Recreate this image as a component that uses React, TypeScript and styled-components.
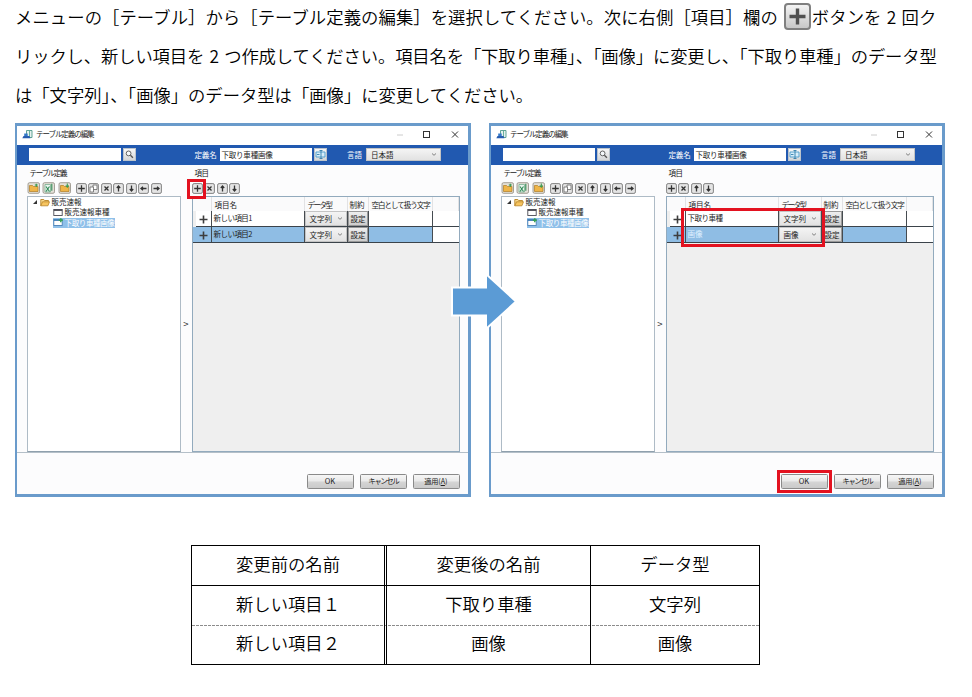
import React from "react";
import styled, { createGlobalStyle, css } from "styled-components";

const Global = createGlobalStyle`
  * { box-sizing: border-box; }
  body { margin: 0; background: #fff; overflow: hidden; }
`;

const Page = styled.main`
  width: 972px;
  height: 697px;
  overflow: hidden;
  color: #000;
  font-family: "Noto Sans CJK JP", "Noto Sans", sans-serif;
  font-weight: 350;
`;

/* ---------- instructions ---------- */

const Instructions = styled.section`
  margin: -3px 0 0 15px;
  height: 126px;
  font-size: 17.33px;
`;

const Line = styled.div<{ $spacing?: number }>`
  display: flex;
  align-items: center;
  height: 39px;
  white-space: pre;
  letter-spacing: ${(p) => p.$spacing ?? 0}px;
`;

const Digit = styled.span`
  display: inline-block;
  width: 20px;
  text-align: center;
  letter-spacing: 0;
`;

const BigPlus = styled.span`
  display: flex;
  flex: none;
  width: 27px;
  height: 27px;
  margin: 0 1px 0 6px;
`;

/* ---------- dialogs ---------- */

const Figures = styled.section`
  position: relative;
  display: flex;
  gap: 18px;
  padding-left: 15px;
`;

const Dialog = styled.article`
  position: relative;
  display: flex;
  flex-direction: column;
  width: 456px;
  height: 374px;
  border: 3px solid #6a9bcb;
  border-left-width: 2.5px;
  background: #fcfcfd;
  color: #222;
  font-size: 7.5px;
  font-weight: 400;
`;

const Text = styled.span<{ $w: number; $n: number; $size?: number; $color?: string }>`
  flex: none;
  width: ${(p) => p.$w}px;
  font-size: ${(p) => p.$size ?? 7.5}px;
  letter-spacing: ${(p) => p.$w / p.$n - (p.$size ?? 7.5)}px;
  line-height: 10px;
  white-space: nowrap;
  color: ${(p) => p.$color ?? "#222"};
`;

const TitleBar = styled.header`
  display: flex;
  align-items: center;
  height: 19px;
  padding: 0 7.5px 3px 5px;
  gap: 3px;
  background: #fff;
`;

const WindowControls = styled.div`
  display: flex;
  margin-left: auto;
`;

const Band = styled.div`
  display: flex;
  align-items: center;
  height: 20px;
  padding: 0 0 1px 12px;
  background: #2159b0;
`;

const Field = styled.div<{ $w: number; $ml?: number }>`
  display: flex;
  align-items: center;
  width: ${(p) => p.$w}px;
  height: 13px;
  margin-left: ${(p) => p.$ml ?? 0}px;
  padding-left: 2px;
  background: #fff;
`;

const Select = styled.div<{ $w?: number; $ml?: number }>`
  display: flex;
  align-items: center;
  justify-content: space-between;
  width: ${(p) => (p.$w ? `${p.$w}px` : "100%")};
  height: ${(p) => (p.$w ? "13px" : "100%")};
  margin-left: ${(p) => p.$ml ?? 0}px;
  padding: 0 3px 0 4px;
  border: 1px solid #c4c4c4;
  background: linear-gradient(#f4f4f4, #e2e2e2);
`;

const BandButton = styled.div`
  display: flex;
  width: 13px;
  height: 13px;
  margin-left: 2px;
  border: 1px solid #bcc4cc;
  background: linear-gradient(#f7f7f7, #d4d6d8);
`;

const Spacer = styled.div<{ $w: number }>`
  flex: none;
  width: ${(p) => p.$w}px;
`;

const Body = styled.div`
  display: grid;
  grid-template-columns: 154px 11px 268px;
  height: 288px;
  padding-left: 9.5px;
  border-bottom: 1px solid #b4bfc8;
`;

const Column = styled.div`
  display: flex;
  flex-direction: column;
`;

const ColumnLabel = styled.div`
  display: flex;
  height: 16px;
  padding: 3px 0 0 3px;
`;

const Tools = styled.div`
  display: flex;
  align-items: center;
  height: 15px;
  padding-bottom: 1px;
  gap: 1.5px;
`;

const Splitter = styled.div`
  display: flex;
  align-items: center;
  justify-content: center;
  padding-top: 30px;
  font-size: 9.5px;
  color: #333;
`;

const Tree = styled.div`
  flex: 1;
  border: 1px solid #aebbc6;
  border-bottom-color: #8fa0ad;
  background: #fff;
`;

const TreeRow = styled.div<{ $indent: number }>`
  display: flex;
  align-items: center;
  height: 10.3px;
  padding-left: ${(p) => p.$indent}px;
  gap: 2px;
`;

const TreeHit = styled.div<{ $selected?: boolean }>`
  display: flex;
  align-items: center;
  gap: 2px;
  height: 10px;
  background: ${(p) => (p.$selected ? "#8fc0e9" : "transparent")};
`;

const Grid = styled.div`
  flex: 1;
  border: 1px solid #92aabd;
  padding-left: 3px;
  background: #efefef;
`;

const gridColumns = css`
  display: grid;
  grid-template-columns: 16px 93px 43px 21px 64px 1fr;
`;

const GridHead = styled.div`
  ${gridColumns}
  height: 14px;
  margin-left: -3px;
  padding-left: 3px;
  background: #fafafb;
`;

const HeadCell = styled.div<{ $pad?: number }>`
  display: flex;
  align-items: center;
  padding: 1px 0 0 ${(p) => p.$pad ?? 3}px;
  border-right: 1px solid #e2e2e4;
`;

const GridRow = styled.div<{ $selected?: boolean }>`
  ${gridColumns}
  height: 16px;
  margin-left: ${(p) => (p.$selected ? -3 : 0)}px;
  padding-left: ${(p) => (p.$selected ? 3 : 0)}px;
  border-bottom: 1px solid #3b434a;
  background: ${(p) => (p.$selected ? "#8fbde4" : "#fff")};
`;

const Cell = styled.div<{ $white?: boolean }>`
  display: flex;
  align-items: center;
  min-width: 0;
  border-right: 1px solid #454b50;
  ${(p) => p.$white && "background: #fff; border-right: 0;"}
`;

const NameCell = styled(Cell)`
  padding: 0 0 2px 2px;
`;

const SetButton = styled.div`
  display: flex;
  align-items: center;
  justify-content: center;
  width: 100%;
  height: 100%;
  padding-left: 1px;
  border: 1px solid #999;
  background: linear-gradient(#eee, #cdcdcd);
`;

const Footer = styled.footer`
  display: flex;
  justify-content: flex-end;
  gap: 5.5px;
  padding: 20.5px 8px 0 0;
`;

const Button = styled.div`
  display: flex;
  align-items: center;
  justify-content: center;
  width: 47.5px;
  height: 15px;
  border: 1px solid #8a8a8a;
  border-radius: 1.5px;
  background: linear-gradient(#f6f6f6, #e9e9e9 48%, #d5d5d5 52%, #cacaca);
`;

const Callout = styled.div<{ $x: number; $y: number; $w: number; $h: number }>`
  position: absolute;
  left: ${(p) => p.$x}px;
  top: ${(p) => p.$y}px;
  width: ${(p) => p.$w}px;
  height: ${(p) => p.$h}px;
  border: 3px solid #e31220;
`;

const Arrow = styled.svg`
  position: absolute;
  left: 450px;
  top: 150px;
`;

/* ---------- table ---------- */

const RenameTable = styled.section`
  width: 569px;
  height: 120px;
  margin: 48px 0 0 191px;
  border: 1px solid #000;
  font-size: 17.33px;
`;

const TableRow = styled.div<{ $h: number; $rule?: "solid" | "dashed" }>`
  display: grid;
  grid-template-columns: 195px 204px 168px;
  height: ${(p) => p.$h}px;
  background-repeat: no-repeat;
  background-position: 0 100%;
  background-size: 100% 1px;
  background-image: ${(p) =>
    p.$rule === "solid"
      ? "linear-gradient(#000, #000)"
      : p.$rule === "dashed"
      ? "repeating-linear-gradient(90deg, #8c8c8c 0 3px, transparent 3px 4px)"
      : "none"};
`;

const TableCell = styled.div<{ $rule?: string }>`
  display: flex;
  align-items: center;
  justify-content: center;
  padding-bottom: 4px;
  line-height: 24px;
  border-right: ${(p) => p.$rule ?? "0"};
`;

/* ---------- icons ---------- */

type ToolKind = "plus" | "copy" | "x" | "up" | "down" | "left" | "right";

const glyphs: Record<ToolKind, string> = {
  plus: "M5.5 2.2v6.600M2.200 5.500h6.600",
  copy: "M2 4h3.500v5h-3.500zM5 4V2h4v4.500h-3.500",
  x: "M3.5 3.5l4 4M7.5 3.5l-4 4",
  up: "M5.5 8.5V3.5M3.8 5L5.5 3l1.7 2",
  down: "M5.5 2.5v5M3.8 6l1.7 2 1.7-2",
  left: "M8.5 5.5h-5M5 3.8l-2 1.7 2 1.7",
  right: "M2.5 5.5h5M6 3.8l2 1.7-2 1.7",
};

const ToolIcon = ({ kind }: { kind: ToolKind }) => (
  <svg width="11" height="11" viewBox="0 0 11 11">
    <rect x=".6" y=".6" width="9.8" height="9.8" rx="1.5" fill="#e4e4e4" stroke="#777" strokeWidth=".9" />
    <path d={glyphs[kind]} fill={kind === "copy" ? "#fff" : "none"} stroke={kind === "copy" ? "#666" : "#333"} strokeWidth={kind === "copy" ? 0.8 : 1.3} />
  </svg>
);

const FolderTool = ({ kind }: { kind: "up" | "excel" | "down" }) => (
  <svg width="14" height="12" viewBox="0 0 14 12">
    <rect x="1" y=".7" width="11.5" height="10.6" rx="1.5" fill="#e4e0d8" stroke="#8f8a80" strokeWidth=".8" />
    {kind === "excel" ? (
      <>
        <path d="M3 2.500h5.500v7.500H3z" fill="#e9f4ee" stroke="#6aa884" strokeWidth=".7" />
        <path d="M4 4.500l3.500 5M7.500 4.500l-3.500 5M9.800 1.800v7" stroke="#2f8a55" strokeWidth="1.1" />
      </>
    ) : (
      <>
        <path d="M2.500 3.500h3l1 1h4.500v5h-8.500z" fill="#efb548" stroke="#b07c22" strokeWidth=".7" />
        <path d={kind === "up" ? "M9.3 5V1.7M7.800 3h3" : "M9.3 1.5v3.3M7.8 3.5l1.5 1.7 1.5-1.7"} fill="none" stroke="#3c9a50" strokeWidth="1.1" />
      </>
    )}
  </svg>
);

const AppIcon = () => (
  <svg width="11" height="11" viewBox="0 0 11 11">
    <path d="M4.5 1.5h5.5v7h-5.5z" fill="#e6f1ee" stroke="#4f9a8b" strokeWidth=".9" />
    <path d="M7.5 2v6" stroke="#68b09b" strokeWidth="1" />
    <path d="M2.200 4.500h3.500v3h-3.500z" fill="#3478c8" />
    <path d="M.3 9.300l1.200-2.300h6l1 2.300z" fill="#275db0" />
  </svg>
);

const FolderIcon = () => (
  <svg width="10" height="9" viewBox="0 0 10 9">
    <path d="M.8 7.8V1.5h3l.8 1h3.9v1.3" fill="#f9d98d" stroke="#b98324" strokeWidth=".9" />
    <path d="M.8 7.8l1.7-4h7l-1.6 4z" fill="#f7c560" stroke="#b98324" strokeWidth=".8" />
  </svg>
);

const TableIcon = ({ active }: { active?: boolean }) => (
  <svg width="10" height="9" viewBox="0 0 10 9">
    <rect x=".8" y="1.5" width="8.4" height="6" fill="#fff" stroke={active ? "#4b80b5" : "#4b4b55"} strokeWidth=".9" />
    <path d="M.8 2.2h8.4" stroke={active ? "#3a78b5" : "#44444e"} strokeWidth="1.4" />
    {active && <path d="M7.8.3v4M5.8 2.3h4" stroke="#37a055" strokeWidth="1.5" />}
  </svg>
);

const Chevron = () => (
  <svg width="6" height="5" viewBox="0 0 6 5">
    <path d="M1 1.5l2 1.8 2-1.8" fill="none" stroke="#666" strokeWidth=".8" />
  </svg>
);

const RowPlus = () => (
  <svg width="15" height="14" viewBox="0 0 15 14">
    <path d="M7.5 3.500v8M3.500 7.500h8" stroke="#3d3d3d" strokeWidth="1.6" />
  </svg>
);

/* ---------- composition ---------- */

interface Item {
  name: string;
  width: number;
  ems: number;
  type: string;
  nameColor?: string;
}

const leftTools: ToolKind[] = ["plus", "copy", "x", "up", "down", "left", "right"];
const rightTools: ToolKind[] = ["plus", "x", "up", "down"];

const DefinitionDialog = ({ items, children }: { items: Item[]; children?: React.ReactNode }) => (
  <Dialog>
    <TitleBar>
      <AppIcon />
      <Text $w={58} $n={9}>テーブル定義の編集</Text>
      <WindowControls>
        <svg width="64" height="11" viewBox="0 0 64 11">
          <path d="M-1.500 6h6" stroke="#ccc" transform="translate(1.500 0)" />
          <rect x="26.5" y="2.5" width="6" height="6" fill="none" stroke="#333" />
          <path d="M55 2.5l6 6M61 2.5l-6 6" stroke="#333" />
        </svg>
      </WindowControls>
    </TitleBar>
    <Band>
      <Field $w={92} />
      <BandButton>
        <svg width="11" height="11" viewBox="0 0 11 11">
          <circle cx="4.6" cy="4.4" r="2.4" fill="#f4f8fb" stroke="#555" strokeWidth=".9" />
          <path d="M6.4 6.3l2.5 2.5" stroke="#555" strokeWidth="1.3" />
        </svg>
      </BandButton>
      <Spacer $w={58.5} />
      <Text $w={22} $n={3} $color="#fff">定義名</Text>
      <Field $w={92} $ml={3}><Text $w={51} $n={7}>下取り車種画像</Text></Field>
      <BandButton>
        <svg width="11" height="11" viewBox="0 0 11 11">
          <path d="M1 3h9v5H1z" fill="#d6edfa" stroke="#4b9bcb" strokeWidth=".9" />
          <path d="M4.500 1.500h3M6 1.500v8M4.500 9.500h3M2 5.500h2.500" stroke="#347fac" strokeWidth=".9" />
        </svg>
      </BandButton>
      <Spacer $w={20.5} />
      <Text $w={15} $n={2} $color="#fff">言語</Text>
      <Select $w={75} $ml={4}><Text $w={22.5} $n={3}>日本語</Text><Chevron /></Select>
    </Band>
    <Body>
      <Column>
        <ColumnLabel><Text $w={37} $n={6}>テーブル定義</Text></ColumnLabel>
        <Tools>
          <FolderTool kind="up" />
          <FolderTool kind="excel" />
          <FolderTool kind="down" />
          <Spacer $w={1} />
          {leftTools.map((k) => <ToolIcon key={k} kind={k} />)}
        </Tools>
        <Tree>
          <TreeRow $indent={4}>
            <svg width="6" height="6" viewBox="0 0 6 6"><path d="M5 1v4H1z" fill="#333" /></svg>
            <TreeHit><FolderIcon /><Text $w={30} $n={4}>販売速報</Text></TreeHit>
          </TreeRow>
          <TreeRow $indent={25}>
            <TreeHit><TableIcon /><Text $w={45} $n={6}>販売速報車種</Text></TreeHit>
          </TreeRow>
          <TreeRow $indent={25}>
            <TreeHit $selected><TableIcon active /><Text $w={50} $n={7} $color="#fff">下取り車種画像</Text></TreeHit>
          </TreeRow>
        </Tree>
      </Column>
      <Splitter>&gt;</Splitter>
      <Column>
        <ColumnLabel><Text $w={14} $n={2}>項目</Text></ColumnLabel>
        <Tools>{rightTools.map((k) => <ToolIcon key={k} kind={k} />)}</Tools>
        <Grid>
          <GridHead>
            <HeadCell />
            <HeadCell><Text $w={22.5} $n={3}>項目名</Text></HeadCell>
            <HeadCell><Text $w={24} $n={4}>データ型</Text></HeadCell>
            <HeadCell $pad={2}><Text $w={15} $n={2}>制約</Text></HeadCell>
            <HeadCell><Text $w={58.5} $n={9}>空白として扱う文字</Text></HeadCell>
            <HeadCell />
          </GridHead>
          {items.map((item, i) => (
            <GridRow key={item.name} $selected={i === 1}>
              <Cell><RowPlus /></Cell>
              <NameCell><Text $w={item.width} $n={item.ems} $color={item.nameColor}>{item.name}</Text></NameCell>
              <Cell>
                <Select><Text $w={item.type.length * 7.5} $n={item.type.length}>{item.type}</Text><Chevron /></Select>
              </Cell>
              <Cell><SetButton><Text $w={15} $n={2}>設定</Text></SetButton></Cell>
              <Cell />
              <Cell $white />
            </GridRow>
          ))}
        </Grid>
      </Column>
    </Body>
    <Footer>
      <Button><Text $w={11} $n={1.5}>OK</Text></Button>
      <Button><Text $w={30} $n={5}>キャンセル</Text></Button>
      <Button><Text $w={24} $n={3.4} $size={7.2}>適用(<u>A</u>)</Text></Button>
    </Footer>
    {children}
  </Dialog>
);

const before: Item[] = [
  { name: "新しい項目1", width: 39, ems: 5.6, type: "文字列" },
  { name: "新しい項目2", width: 39, ems: 5.6, type: "文字列" },
];

const after: Item[] = [
  { name: "下取り車種", width: 35, ems: 5, type: "文字列" },
  { name: "画像", width: 15, ems: 2, type: "画像", nameColor: "#dff0ff" },
];

const renames = [
  ["変更前の名前", "変更後の名前", "データ型"],
  ["新しい項目１", "下取り車種", "文字列"],
  ["新しい項目２", "画像", "画像"],
];

export default function App() {
  return (
    <Page>
      <Global />
      <Instructions>
        <Line $spacing={0.08}>
          <span>メニューの［テーブル］から［テーブル定義の編集］を選択してください。次に右側［項目］欄の</span>
          <BigPlus>
            <svg width="27" height="27" viewBox="0 0 27 27">
              <defs>
                <linearGradient id="plusFace" x1="0" y1="0" x2="0" y2="1">
                  <stop offset="0" stopColor="#f5f5f5" />
                  <stop offset="1" stopColor="#c6c6c6" />
                </linearGradient>
              </defs>
              <rect x="1" y="1" width="25" height="25" rx="3" fill="url(#plusFace)" stroke="#808080" strokeWidth="2" />
              <path d="M13.500 5.500v16M5.500 13.500h16" stroke="#505050" strokeWidth="3.4" />
            </svg>
          </BigPlus>
          <span>ボタンを</span><Digit>2</Digit><span>回ク</span>
        </Line>
        <Line $spacing={-0.13}>
          <span>リックし、新しい項目を</span><Digit>2</Digit>
          <span>つ作成してください。項目名を「下取り車種」、「画像」に変更し、「下取り車種」のデータ型</span>
        </Line>
        <Line $spacing={-0.02}>
          <span>は「文字列」、「画像」のデータ型は「画像」に変更してください。</span>
        </Line>
      </Instructions>

      <Figures>
        <DefinitionDialog items={before}>
          <Callout $x={169.5} $y={53} $w={19} $h={20} />
        </DefinitionDialog>
        <DefinitionDialog items={after}>
          <Callout $x={189.5} $y={82} $w={144} $h={39} />
          <Callout $x={285.5} $y={344} $w={55} $h={23} />
        </DefinitionDialog>
        <Arrow width="68" height="58" viewBox="0 0 68 58">
          <path d="M2 14.500h34V1l30 27.500L36 56V42.500H2z" fill="#5b9bd5" stroke="#fff" strokeWidth="2" />
        </Arrow>
      </Figures>

      <RenameTable>
        {renames.map((row, r) => (
          <TableRow key={row[0]} $h={r === 2 ? 38 : 40} $rule={r === 0 ? "solid" : r === 1 ? "dashed" : undefined}>
            <TableCell $rule="3px double #000">{row[0]}</TableCell>
            <TableCell $rule="1px solid #000">{row[1]}</TableCell>
            <TableCell>{row[2]}</TableCell>
          </TableRow>
        ))}
      </RenameTable>
    </Page>
  );
}
